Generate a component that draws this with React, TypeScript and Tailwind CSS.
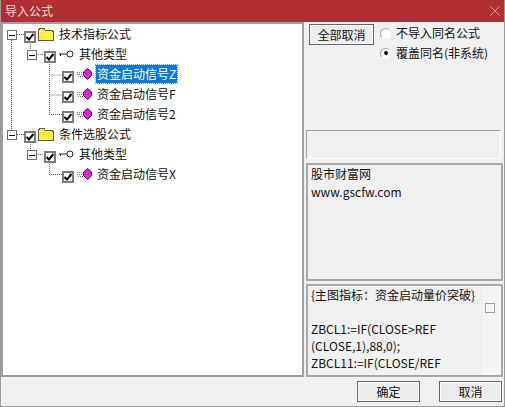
import { X } from 'lucide-react'

function Expander() {
  return (
    <span className="w-[10px] h-[10px] border border-[#6e6e6e] bg-white flex items-center justify-center shrink-0 translate-y-px">
      <span className="w-[6px] h-px bg-black" />
    </span>
  )
}

function TreeCheck() {
  return (
    <span className="w-[12px] h-[12px] border-2 border-[#7c7c7c] bg-white flex items-center justify-center shrink-0 translate-y-[3px]">
      <svg width="8" height="8" viewBox="0 0 8 8">
        <path d="M0.5 4L3 6.5L7.5 1" stroke="#000" strokeWidth="2" fill="none" />
      </svg>
    </span>
  )
}

function FolderIcon() {
  return (
    <svg width="16" height="13" viewBox="0 0 16 13" className="shrink-0" shapeRendering="crispEdges">
      <defs>
        <pattern id="dither" width="2" height="2" patternUnits="userSpaceOnUse">
          <rect width="2" height="2" fill="#fff82a" />
          <rect width="1" height="1" fill="#e4de50" />
        </pattern>
      </defs>
      <path d="M0.5 12.5V2L2 0.5H6L7.5 2.5H14L15.5 4V12.5Z" fill="url(#dither)" stroke="#5c5c40" />
      <path d="M1 3H7" stroke="#fff" />
    </svg>
  )
}

function KeyIcon() {
  return (
    <svg width="16" height="9" viewBox="0 0 16 9" className="shrink-0">
      <circle cx="12" cy="4" r="3" fill="#fff" stroke="#222" />
      <path d="M1 4H9M2.5 4V6" stroke="#222" fill="none" />
    </svg>
  )
}

function FormulaIcon() {
  return (
    <svg width="16" height="12" viewBox="0 0 16 12" className="shrink-0">
      <path d="M1 4.5H7M1 6.5H7M2 8.5H7" stroke="#8a8a8a" strokeDasharray="1 1" />
      <path d="M11.5 0.5L15.5 4V7.5L11.5 11.5L7.5 7.5V4Z" fill="#f020e0" stroke="#301040" />
      <path d="M8 4L11.5 7L15 4" fill="none" stroke="#a010a0" strokeWidth="0.7" />
    </svg>
  )
}

type Row = { level: 0 | 1 | 2; label: string; selected?: boolean }

const rows: Row[] = [
  { level: 0, label: '技术指标公式' },
  { level: 1, label: '其他类型' },
  { level: 2, label: '资金启动信号Z', selected: true },
  { level: 2, label: '资金启动信号F' },
  { level: 2, label: '资金启动信号2' },
  { level: 0, label: '条件选股公式' },
  { level: 1, label: '其他类型' },
  { level: 2, label: '资金启动信号X' },
]

function TreeRow({ level, label, selected }: Row) {
  return (
    <div className="h-[20px] flex items-center">
      <div className={level === 0 ? 'w-[4px] shrink-0' : level === 1 ? 'w-[24px] shrink-0' : 'w-[59px] shrink-0'} />
      {level < 2 && <Expander />}
      {level < 2 && <div className="w-[7px] shrink-0" />}
      <TreeCheck />
      <div className="w-[2px] shrink-0" />
      {level === 0 && <FolderIcon />}
      {level === 1 && <KeyIcon />}
      {level === 2 && <FormulaIcon />}
      <span
        className={
          selected
            ? 'ml-[4px] px-px h-[18px] leading-[18px] bg-[#0a78d7] text-white outline-1 outline-dotted outline-[#e08a20]'
            : 'ml-[4px] px-px leading-[18px]'
        }
      >
        {label}
      </span>
    </div>
  )
}

function TreeLines() {
  return (
    <svg className="absolute left-0 top-0 pointer-events-none" width="110" height="170">
      <g stroke="#666" strokeDasharray="1 1" fill="none">
        <path d="M8.5 14V110" />
        <path d="M14 10.5H21M14 110.5H21" />
        <path d="M27.5 20V27M27.5 120V127" />
        <path d="M33 30.5H40M33 130.5H40" />
        <path d="M46.5 38V90.5H59M46.5 51H59M46.5 71H59M46.5 138V150.5H59" />
      </g>
    </svg>
  )
}

function Radio({ checked }: { checked?: boolean }) {
  return (
    <span className="w-[11px] h-[11px] rounded-full border border-[#a8a8a8] border-r-white border-b-white bg-white flex items-center justify-center shrink-0">
      {checked && <span className="w-[4px] h-[4px] rounded-full bg-black" />}
    </span>
  )
}

export default function App() {
  return (
    <div
      className="w-[505px] h-[407px] bg-[#f0f0f0] flex flex-col text-[12px] text-[#111] overflow-hidden border-b border-x border-[#9a9a9a]"
      style={{ fontFamily: '"Noto Sans CJK SC", sans-serif' }}
    >
      <div className="h-[22px] -mx-px bg-[#b02f35] flex items-center justify-between pl-[5px] pr-px shrink-0 text-[#f4dcdc]">
        <span>导入公式</span>
        <X size={18} strokeWidth={0.8} className="text-[#eed6d6]" />
      </div>

      <div className="flex flex-1 min-h-0">
        <div className="relative w-[303px] h-[355px] border-2 border-[#a0a0a0] bg-white shrink-0">
          <TreeLines />
          <div>
            {rows.map((row, i) => (
              <TreeRow key={i} {...row} />
            ))}
          </div>
        </div>

        <div className="ml-[1px] w-[198px] h-[355px] flex flex-col">
          <div className="h-[108px] flex items-start pl-[4px] pt-[2px] shrink-0">
            <button className="w-[65px] h-[21px] border border-[#666] bg-[#ececec] shadow-[inset_0_0_0_1px_#fafafa] shrink-0">
              全部取消
            </button>
            <div className="ml-[6px] flex flex-col gap-[6px] pt-[2px]">
              <label className="flex items-center gap-[5px] h-[14px]">
                <Radio />
                不导入同名公式
              </label>
              <label className="flex items-center gap-[5px] h-[14px]">
                <Radio checked />
                覆盖同名(非系统)
              </label>
            </div>
          </div>

          <div className="ml-px h-[29px] w-[195px] border border-[#a0a0a0] border-b-white border-r-white shrink-0" />

          <div className="mt-[4px] ml-px h-[118px] border-2 border-[#a8a8a8] pl-[3px] leading-[18px] shrink-0">
            <p>股市财富网</p>
            <p>www.gscfw.com</p>
          </div>

          <div className="mt-[3px] ml-px flex-1 min-h-0 border-2 border-[#a8a8a8] flex">
            <div className="flex-1 pl-[3px] leading-[17px]">
              <p className="whitespace-nowrap">{'{主图指标\uFF1A资金启动量价突破}'}</p>
              <p className="h-[17px]" />
              <p>ZBCL1:=IF(CLOSE&gt;REF</p>
              <p>(CLOSE,1),88,0);</p>
              <p>ZBCL11:=IF(CLOSE/REF</p>
            </div>
            <div className="w-[18px] bg-[#f5f5f5] pt-[17px] pl-[2px] shrink-0">
              <span className="block w-[10px] h-[10px] border border-[#a0a0a0]" />
            </div>
          </div>
        </div>
      </div>

      <div className="h-[29px] flex items-center justify-end gap-[19px] pr-[2px] shrink-0">
        <button className="w-[63px] h-[21px] border border-[#666] bg-[#ececec] shadow-[inset_0_0_0_1px_#fafafa]">确定</button>
        <button className="w-[63px] h-[21px] border border-[#666] bg-[#ececec] shadow-[inset_0_0_0_1px_#fafafa]">取消</button>
      </div>
    </div>
  )
}
